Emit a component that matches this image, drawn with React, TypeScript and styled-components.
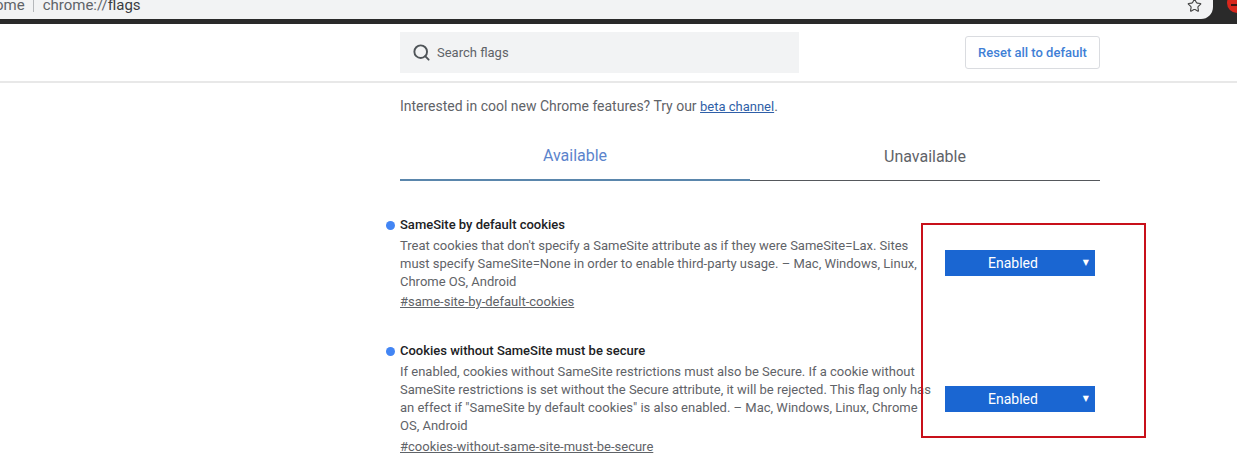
import React from "react";
import styled, { createGlobalStyle } from "styled-components";
import { Search, Star } from "lucide-react";

const Global = createGlobalStyle`
  html, body { margin: 0; padding: 0; background: #fff; }
  body { font-family: Roboto, "Liberation Sans", sans-serif; overflow: hidden; }
`;

const Page = styled.div`
  position: relative;
  width: 1237px;
  height: 471px;
  overflow: hidden;
`;

const Chrome = styled.div`
  display: flex;
  height: 24px;
  background: #2a2a2a;
  overflow: hidden;
`;

const Omnibox = styled.div`
  width: 1213px;
  height: 19px;
  flex: none;
  display: flex;
  align-items: flex-end;
  background: #f2f3f4;
  border-bottom-right-radius: 12px;
  overflow: hidden;
`;

const Url = styled.div`
  display: flex;
  align-items: center;
  flex: 1;
  height: 20px;
  margin-left: -28px;
  margin-bottom: 4px;
  font-size: 15px;
  color: #5f6368;
`;

const Divider = styled.span`
  width: 1px;
  height: 14px;
  background: #b5b8bb;
  margin: 0 9px 0 8px;
`;

const UrlStrong = styled.span`
  color: #3a3c3f;
`;

const StarIcon = styled(Star)`
  margin-right: 11px;
  margin-bottom: 6px;
  color: #444;
`;

const ProfileSlot = styled.div`
  flex: 1;
  display: flex;
  justify-content: flex-end;
`;

const Profile = styled.span`
  position: relative;
  width: 20px;
  height: 20px;
  margin: -7px -10px 0 0;
  border-radius: 50%;
  background: #d8261c;
  &::after {
    content: "";
    position: absolute;
    left: 4px;
    top: 11px;
    width: 10px;
    height: 2px;
    background: #3a1512;
  }
`;

const Header = styled.header`
  display: flex;
  align-items: center;
  height: 57px;
  padding-left: 400px;
  border-bottom: 2px solid #e8e8e8;
`;

const HeaderInner = styled.div`
  width: 700px;
  display: flex;
  justify-content: space-between;
  align-items: center;
`;

const SearchBox = styled.div`
  width: 399px;
  height: 41px;
  display: flex;
  align-items: center;
  gap: 6px;
  padding-left: 12px;
  box-sizing: border-box;
  background: #f2f3f4;
  color: #5f6368;
  font-size: 13px;
`;

const SearchIcon = styled(Search)`
  color: #4f5458;
`;

const ResetButton = styled.button`
  width: 135px;
  height: 33px;
  padding: 0;
  background: #fff;
  border: 1px solid #dadce0;
  border-radius: 3px;
  color: #3f7fd6;
  font: 500 13px Roboto, sans-serif;
`;

const Main = styled.main`
  width: 700px;
  margin-left: 400px;
`;

const Intro = styled.p`
  margin: 0;
  padding-top: 14px;
  height: 34px;
  font-size: 14px;
  line-height: 18px;
  letter-spacing: -0.01px;
  color: #5f6368;
`;

const BetaLink = styled.a`
  font-size: 13px;
  color: #2f5fa8;
  text-decoration: underline;
`;

const Tabs = styled.div`
  display: grid;
  grid-template-columns: 350px 350px;
  height: 50px;
`;

const Tab = styled.div<{ $active?: boolean }>`
  display: flex;
  align-items: center;
  justify-content: center;
  padding-top: ${(p) => (p.$active ? 0 : 2)}px;
  box-sizing: border-box;
  font-size: 16px;
  color: ${(p) => (p.$active ? "#5b84cc" : "#5f6368")};
  border-bottom: ${(p) => (p.$active ? "2px solid #5a86ac" : "1px solid #55585c")};
  height: ${(p) => (p.$active ? 50 : 49.5)}px;
`;

const Flag = styled.article<{ $top: number }>`
  position: relative;
  margin-top: ${(p) => p.$top}px;
  display: flex;
`;

const FlagText = styled.div`
  width: 532px;
  flex: none;
`;

const Title = styled.h3`
  position: relative;
  margin: 0;
  height: 18px;
  font-size: 13px;
  line-height: 18px;
  font-weight: 500;
  color: #202124;
  &::before {
    content: "";
    position: absolute;
    left: -14px;
    top: 5px;
    width: 9px;
    height: 9px;
    border-radius: 50%;
    background: #4285f4;
  }
`;

const Description = styled.p`
  margin: 3px 0 0;
  font-size: 13px;
  line-height: 18px;
  color: #5f6368;
`;

const Permalink = styled.a<{ $gap: number }>`
  display: block;
  margin-top: ${(p) => p.$gap}px;
  font-size: 13px;
  line-height: 18px;
  color: #5f6368;
  text-decoration: underline;
`;

const Select = styled.div<{ $top: number }>`
  position: relative;
  width: 150px;
  height: 26px;
  margin: ${(p) => p.$top}px 0 0 13px;
  flex: none;
  display: flex;
  align-items: center;
  justify-content: center;
  box-sizing: border-box;
  padding-right: 14px;
  background: #1a66d2;
  color: #fff;
  font-size: 14px;
`;

const Caret = styled.span`
  position: absolute;
  right: 6px;
  top: 7px;
  font: 8px/12px "DejaVu Sans", sans-serif;
  color: #fff;
`;

const Highlight = styled.div`
  position: absolute;
  left: 921px;
  top: 223px;
  width: 225px;
  height: 215px;
  box-sizing: border-box;
  border: 2px solid #c8101a;
  pointer-events: none;
`;

export default function App() {
  return (
    <Page>
      <Global />
      <Chrome>
        <Omnibox>
          <Url>
            Chrome<Divider />
            chrome://<UrlStrong>flags</UrlStrong>
          </Url>
          <StarIcon size={15} strokeWidth={1.8} />
        </Omnibox>
        <ProfileSlot>
          <Profile />
        </ProfileSlot>
      </Chrome>
      <Header>
        <HeaderInner>
          <SearchBox>
            <SearchIcon size={19} strokeWidth={2.4} />
            Search flags
          </SearchBox>
          <ResetButton>Reset all to default</ResetButton>
        </HeaderInner>
      </Header>
      <Main>
        <Intro>
          Interested in cool new Chrome features? Try our <BetaLink>beta channel</BetaLink>.
        </Intro>
        <Tabs>
          <Tab $active>Available</Tab>
          <Tab>Unavailable</Tab>
        </Tabs>
        <Flag $top={35}>
          <FlagText>
            <Title>SameSite by default cookies</Title>
            <Description>
              Treat cookies that don't specify a SameSite attribute as if they were SameSite=Lax. Sites must specify
              SameSite=None in order to enable third-party usage. – Mac, Windows, Linux, Chrome OS, Android
            </Description>
            <Permalink $gap={2}>#same-site-by-default-cookies</Permalink>
          </FlagText>
          <Select $top={34}>
            Enabled<Caret>▼</Caret>
          </Select>
        </Flag>
        <Flag $top={31}>
          <FlagText>
            <Title>Cookies without SameSite must be secure</Title>
            <Description>
              If enabled, cookies without SameSite restrictions must also be Secure. If a cookie without SameSite
              restrictions is set without the Secure attribute, it will be rejected. This flag only has an effect if
              "SameSite by default cookies" is also enabled. – Mac, Windows, Linux, Chrome OS, Android
            </Description>
            <Permalink $gap={3}>#cookies-without-same-site-must-be-secure</Permalink>
          </FlagText>
          <Select $top={44}>
            Enabled<Caret>▼</Caret>
          </Select>
        </Flag>
      </Main>
      <Highlight />
    </Page>
  );
}
